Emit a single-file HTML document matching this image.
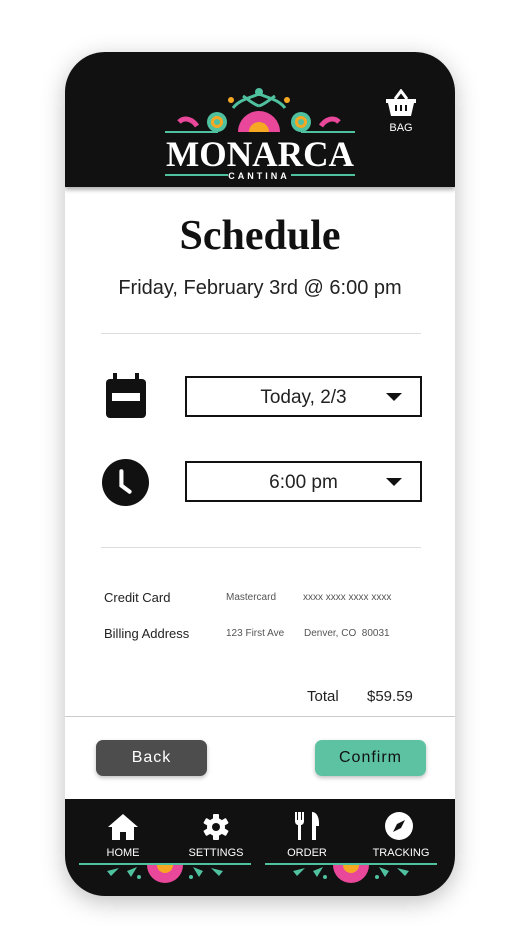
<!DOCTYPE html>
<html><head><meta charset="utf-8"><style>
*{margin:0;padding:0;box-sizing:border-box}
body{width:520px;height:949px;background:#fff;font-family:"Liberation Sans","DejaVu Sans",sans-serif;position:relative;overflow:hidden}
.phone{position:absolute;left:65px;top:52px;width:390px;height:844px;border-radius:40px;background:#fff;overflow:hidden;box-shadow:0 6px 24px rgba(0,0,0,.25)}
.hdr{position:absolute;left:0;top:0;width:390px;height:135px;background:#111;box-shadow:0 3px 4px rgba(0,0,0,.3)}
.abs{position:absolute}
.sep{position:absolute;left:36px;width:320px;height:1px;background:#ddd}
.box{position:absolute;left:120px;width:237px;height:41px;border:2px solid #111;font-size:19px;color:#222}
.box span{position:absolute;left:0;right:0;text-align:center;top:9px}
.tri{position:absolute;right:18px;top:15px;width:0;height:0;border-left:8px solid transparent;border-right:8px solid transparent;border-top:8px solid #111}
.btn{position:absolute;top:688px;height:36px;border-radius:7px;font-size:16px;letter-spacing:1px;text-align:center;line-height:36px;box-shadow:0 2px 4px rgba(0,0,0,.25)}
.ftr{position:absolute;left:0;top:747px;width:390px;height:97px;background:#111}
.nl{position:absolute;top:48px;color:#fff;font-size:11px;width:80px;text-align:center}
</style></head><body>
<div class="phone">
 <div class="hdr">
  <svg class="abs" style="left:98px;top:34px" width="194" height="96" viewBox="0 0 194 96">
   <line x1="2" y1="46" x2="55" y2="46" stroke="#4fc19f" stroke-width="2"/><line x1="138" y1="46" x2="192" y2="46" stroke="#4fc19f" stroke-width="2"/>
   <circle cx="54" cy="36" r="10" fill="#4fc19f"/><circle cx="54" cy="36" r="6" fill="#f7a823"/><circle cx="54" cy="36" r="3" fill="#4fc19f"/>
   <circle cx="138" cy="36" r="10" fill="#4fc19f"/><circle cx="138" cy="36" r="6" fill="#f7a823"/><circle cx="138" cy="36" r="3" fill="#4fc19f"/>
   <path d="M75 46a21 21 0 0 1 42 0z" fill="#e8479a"/><path d="M86 46a10 10 0 0 1 20 0z" fill="#f7a823"/>
   <path d="M16 36c6-6 14-2 18 4M176 36c-6-6-14-2-18 4" stroke="#e8479a" stroke-width="5" fill="none"/>
   <path d="M70 22c6-8 16-10 26-14c10 4 20 6 26 14M80 10c6 4 10 8 16 10M112 10c-6 4-10 8-16 10" stroke="#4fc19f" stroke-width="3" fill="none"/>
   <circle cx="96" cy="6" r="4" fill="#4fc19f"/><circle cx="68" cy="14" r="3" fill="#f7a823"/><circle cx="124" cy="14" r="3" fill="#f7a823"/>
   <text x="3" y="80" textLength="188" lengthAdjust="spacingAndGlyphs" font-family="Liberation Serif,serif" font-weight="bold" font-size="36" fill="#fff">MONARCA</text>
   <line x1="2" y1="89" x2="65" y2="89" stroke="#4fc19f" stroke-width="2"/><line x1="128" y1="89" x2="192" y2="89" stroke="#4fc19f" stroke-width="2"/>
   <text x="96" y="93" text-anchor="middle" font-family="Liberation Sans,sans-serif" font-weight="bold" font-size="9" fill="#fff" letter-spacing="3">CANTINA</text>
  </svg>
  <svg class="abs" style="left:320px;top:37px" width="32" height="30" viewBox="0 0 32 30"><path d="M10 10l6-8 6 8" stroke="#fff" stroke-width="3" fill="none"/><path d="M1 10h30v4h-2l-3 13H6L3 14H1z" fill="#fff"/><path d="M11 16v6M16 16v6M21 16v6" stroke="#111" stroke-width="2"/></svg>
  <div class="abs" style="left:316px;top:70px;color:#fff;font-size:11px;width:40px;text-align:center">BAG</div>
 </div>
 <div class="abs" style="left:0;width:390px;top:160px;text-align:center;font-family:'Liberation Serif',serif;font-weight:bold;font-size:42px;color:#111">Schedule</div>
 <div class="abs" style="left:0;width:390px;top:225px;text-align:center;font-size:20px;color:#222">Friday, February 3rd @ 6:00 pm</div>
 <div class="sep" style="top:281px"></div>
 <svg class="abs" style="left:40px;top:321px" width="42" height="46" viewBox="0 0 42 46"><rect x="1" y="6" width="40" height="39" rx="4" fill="#111"/><rect x="8" y="0" width="4" height="8" fill="#111"/><rect x="30" y="0" width="4" height="8" fill="#111"/><rect x="7" y="20" width="28" height="8" fill="#fff"/></svg>
 <div class="box" style="top:324px"><span>Today, 2/3</span><i class="tri"></i></div>
 <svg class="abs" style="left:37px;top:407px" width="47" height="47" viewBox="0 0 46 46"><circle cx="23" cy="23" r="23" fill="#111"/><path d="M19 12v14l8 6" stroke="#fff" stroke-width="4" fill="none" stroke-linecap="round"/></svg>
 <div class="box" style="top:409px"><span>6:00 pm</span><i class="tri"></i></div>
 <div class="sep" style="top:495px"></div>
 <div class="abs" style="left:39px;top:538px;font-size:13px;color:#222">Credit Card</div>
 <div class="abs" style="left:161px;top:540px;font-size:10px;color:#555">Mastercard</div>
 <div class="abs" style="left:238px;top:540px;font-size:10px;color:#555">xxxx xxxx xxxx xxxx</div>
 <div class="abs" style="left:39px;top:574px;font-size:13px;color:#222">Billing Address</div>
 <div class="abs" style="left:161px;top:576px;font-size:10px;color:#555">123 First Ave</div>
 <div class="abs" style="left:239px;top:576px;font-size:10px;color:#555">Denver, CO &nbsp;80031</div>
 <div class="abs" style="left:242px;top:636px;font-size:15px;color:#222">Total</div>
 <div class="abs" style="left:302px;top:636px;font-size:15px;color:#222">$59.59</div>
 <div class="abs" style="left:0;top:664px;width:390px;height:1px;background:#ccc"></div>
 <div class="btn" style="left:31px;width:111px;background:#4d4d4d;color:#fff">Back</div>
 <div class="btn" style="left:250px;width:111px;background:#5cc2a2;color:#111">Confirm</div>
 <div class="ftr">
  <svg class="abs" style="left:42px;top:14px" width="32" height="28" viewBox="0 0 32 28"><path d="M16 1L1 14h4v13h8v-8h6v8h8V14h4z" fill="#fff"/></svg>
  <svg class="abs" style="left:137px;top:14px" width="28" height="28" viewBox="0 0 28 28"><g fill="#fff"><circle cx="14" cy="14" r="9"/><rect x="11" y="1" width="6" height="26" rx="1"/><rect x="11" y="1" width="6" height="26" rx="1" transform="rotate(60 14 14)"/><rect x="11" y="1" width="6" height="26" rx="1" transform="rotate(120 14 14)"/></g><circle cx="14" cy="14" r="4" fill="#111"/></svg>
  <svg class="abs" style="left:229px;top:12px" width="28" height="30" viewBox="0 0 28 30"><path d="M1 1v9c0 3 2 4 3 4v15h3V14c1 0 3-1 3-4V1H8v8H7V1H4v8H3V1z" fill="#fff"/><path d="M18 1c4 0 7 4 7 11v3h-3v14h-4z" fill="#fff"/></svg>
  <svg class="abs" style="left:319px;top:12px" width="30" height="30" viewBox="0 0 30 30"><circle cx="15" cy="15" r="14" fill="#fff"/><path d="M21 9l-4 8-8 4 4-8z" fill="#111"/></svg>
  <div class="nl" style="left:18px">HOME</div>
  <div class="nl" style="left:111px">SETTINGS</div>
  <div class="nl" style="left:202px">ORDER</div>
  <div class="nl" style="left:296px">TRACKING</div>
  <svg class="abs" style="left:12px;top:62px" width="176" height="26" viewBox="0 0 176 26"><line x1="2" y1="3" x2="174" y2="3" stroke="#4fc19f" stroke-width="2"/><path d="M70 4a18 18 0 0 0 36 0z" fill="#e8479a"/><path d="M80 4a8 8 0 0 0 16 0z" fill="#f7a823"/><path d="M30 10l12-3-8 8zM146 10l-12-3 8 8zM50 10l10-4-6 10zM126 10l-10-4 6 10z" fill="#4fc19f"/><circle cx="62" cy="16" r="2" fill="#4fc19f"/><circle cx="114" cy="16" r="2" fill="#4fc19f"/></svg>
  <svg class="abs" style="left:198px;top:62px" width="176" height="26" viewBox="0 0 176 26"><line x1="2" y1="3" x2="174" y2="3" stroke="#4fc19f" stroke-width="2"/><path d="M70 4a18 18 0 0 0 36 0z" fill="#e8479a"/><path d="M80 4a8 8 0 0 0 16 0z" fill="#f7a823"/><path d="M30 10l12-3-8 8zM146 10l-12-3 8 8zM50 10l10-4-6 10zM126 10l-10-4 6 10z" fill="#4fc19f"/><circle cx="62" cy="16" r="2" fill="#4fc19f"/><circle cx="114" cy="16" r="2" fill="#4fc19f"/></svg>
 </div>
</div>
</body></html>
